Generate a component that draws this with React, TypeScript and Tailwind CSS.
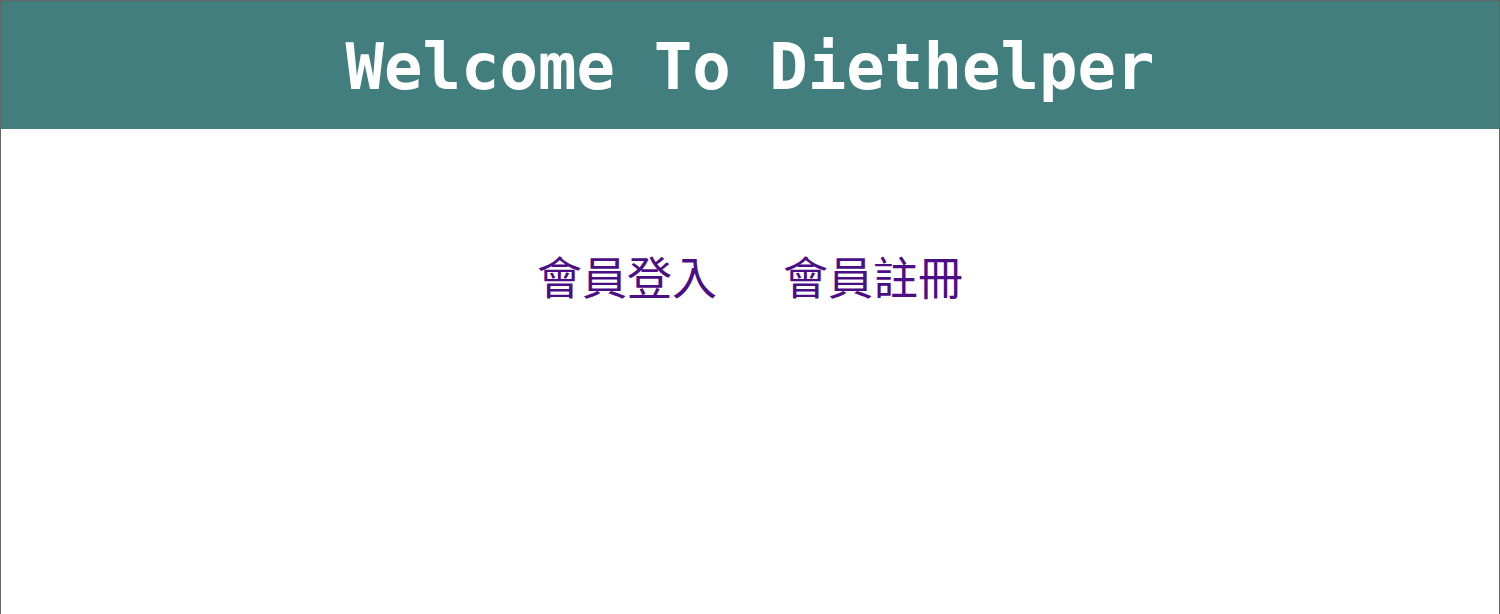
export default function App() {
  return (
    <div className="h-[614px] w-full border border-b-0 border-[#666666] bg-white">
      <header className="flex h-[128px] items-center justify-center bg-[#417e7d]">
        <h1 className="pt-1 text-[64px] font-bold leading-none text-white [font-family:'DejaVu_Sans_Mono',monospace]">
          Welcome To Diethelper
        </h1>
      </header>
      <nav className="flex justify-center gap-[66px] pt-[120px] text-[45px] leading-[54px] font-normal text-[#4b0e84] [font-family:'Noto_Sans_CJK_TC',sans-serif]">
        <a href="#">會員登入</a>
        <a href="#">會員註冊</a>
      </nav>
    </div>
  )
}
